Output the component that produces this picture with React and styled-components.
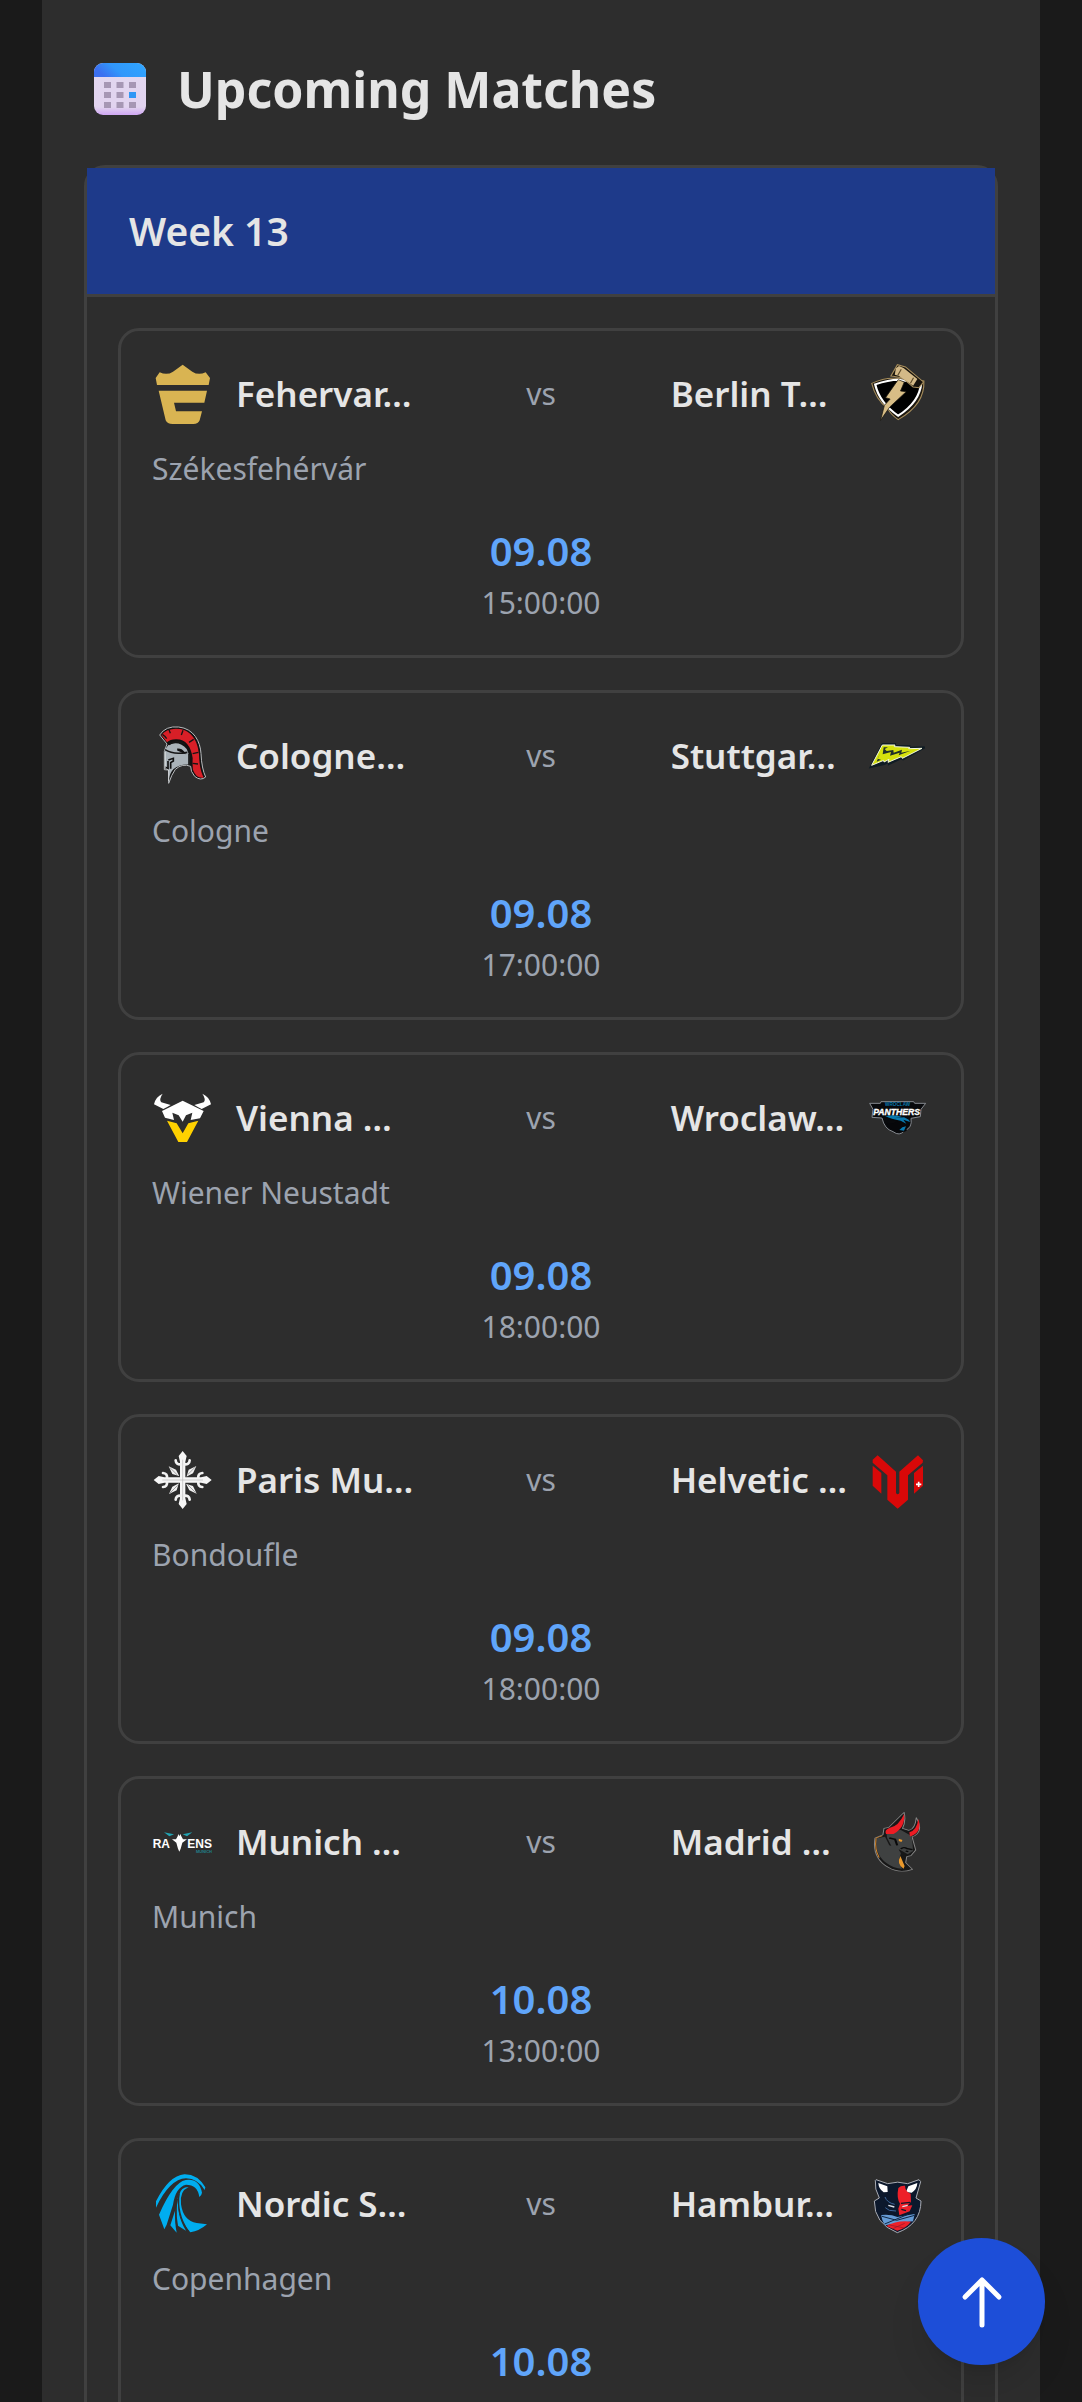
import React from "react";
import styled, { createGlobalStyle } from "styled-components";

const GlobalStyle = createGlobalStyle`
  *, *::before, *::after { box-sizing: border-box; }
  body {
    margin: 0;
    background: #1a1a1a;
    color: #e5e5e5;
    font-family: "Segoe UI", "Noto Sans", "Open Sans", sans-serif;
  }
`;

const Page = styled.div`
  height: 100vh;
  overflow: hidden;
  padding: 0 42px;
`;

const Panel = styled.main`
  min-height: 100%;
  padding: 52px 42px;
  background: #2d2d2d;
`;

const PanelHeader = styled.header`
  display: flex;
  align-items: center;
  gap: 31px;
  padding-left: 10px;
  margin-bottom: 39px;
`;

const CalendarIcon = styled.svg`
  width: 52px;
  height: 52px;
  flex: none;
`;

const Title = styled.h1`
  margin: 0;
  font-size: 50px;
  line-height: 74px;
  font-weight: 700;
`;

const Week = styled.section`
  border: 3px solid #404040;
  border-radius: 21px;
`;

const WeekTitle = styled.h2`
  margin: 0;
  padding: 32px 42px;
  border-bottom: 3px solid #404040;
  background: #1e3a8a;
  font-size: 39px;
  line-height: 62px;
  font-weight: 600;
`;

const MatchList = styled.ul`
  display: flex;
  flex-direction: column;
  gap: 32px;
  margin: 0;
  padding: 31px;
  list-style: none;
`;

const Card = styled.li`
  padding: 31px;
  border: 3px solid #404040;
  border-radius: 21px;
`;

const Teams = styled.div`
  display: grid;
  grid-template-columns: repeat(3, minmax(0, 1fr));
  align-items: center;
`;

const Team = styled.div`
  display: flex;
  flex-direction: ${(p) => (p.$away ? "row-reverse" : "row")};
  align-items: center;
  gap: 20px;
`;

const TeamName = styled.span`
  flex: 1;
  min-width: 0;
  white-space: nowrap;
  font-size: 35px;
  line-height: 52px;
  font-weight: 600;
`;

const Logo = styled.svg`
  width: 64px;
  height: 64px;
  flex: none;
`;

const Muted = styled.span`
  color: #9ca3af;
  font-size: 30px;
  line-height: 42px;
  text-align: center;
`;

const City = styled.p`
  margin: 22px 0 30px;
  color: #9ca3af;
  font-size: 30px;
  line-height: 42px;
`;

const Kickoff = styled.time`
  display: flex;
  flex-direction: column;
`;

const MatchDate = styled.span`
  color: #60a5fa;
  font-size: 40px;
  line-height: 62px;
  font-weight: 600;
  text-align: center;
`;

const TopButton = styled.button`
  position: fixed;
  right: 37px;
  bottom: 37px;
  display: flex;
  align-items: center;
  justify-content: center;
  width: 127px;
  height: 127px;
  padding: 0;
  border: 0;
  border-radius: 50%;
  background: #1d4ed8;
  color: #fff;
  box-shadow: 0 26px 40px -8px rgba(0, 0, 0, 0.12), 0 10px 16px -10px rgba(0, 0, 0, 0.12);
  cursor: pointer;
`;

const ArrowIcon = styled.svg`
  width: 64px;
  height: 64px;
`;

function Calendar() {
  const cells = [];
  for (let r = 0; r < 3; r++) {
    for (let c = 0; c < 3; c++) {
      cells.push(
        <rect key={`${r}${c}`} x={10 + c * 12.5} y={19 + r * 10} width="7" height="6"
          fill={r === 1 && c === 2 ? "#2f97f5" : "#a697b4"} />
      );
    }
  }
  return (
    <CalendarIcon viewBox="0 0 52 52" aria-hidden="true">
      <defs>
        <linearGradient id="calTop" x1="0" x2="1" y1=".3" y2="0">
          <stop offset="0" stopColor="#3b6ff0" />
          <stop offset=".35" stopColor="#3197fb" />
          <stop offset="1" stopColor="#2fa6ff" />
        </linearGradient>
        <linearGradient id="calBody" x1="0" x2="0" y1="0" y2="1">
          <stop offset="0" stopColor="#e2d8ef" />
          <stop offset=".85" stopColor="#e1d3ef" />
          <stop offset="1" stopColor="#cfa6f3" />
        </linearGradient>
      </defs>
      <rect width="52" height="52" rx="9" fill="url(#calBody)" />
      <path d="M0 14V9a9 9 0 0 1 9-9h34a9 9 0 0 1 9 9v5z" fill="url(#calTop)" />
      {cells}
    </CalendarIcon>
  );
}

const logos = {
  fehervar: (
    <Logo viewBox="159 156 192 192" aria-hidden="true">
      <g fill="#d9b452">
        <path d="M174 225l-4-21 12-17q22 10 40-2l29-21 29 21q18 12 40 2l13 17-4 21z" />
        <path d="M179 242h145l-8 36h-91l6 26h78l-7 27q-4 11-19 11h-62q-17 0-21-11z" />
      </g>
    </Logo>
  ),
  berlin: (
    <Logo viewBox="1005 156 167 192" preserveAspectRatio="none" aria-hidden="true">
      <path d="M1020 220q33-17 60-15h26l50 8q3 70-67 116-20-16-27-33-32-28-42-76z" fill="#1d1810" stroke="#a58c5b" strokeWidth="3" />
      <path d="M1029 223q35-14 60-14l60 10q-4 57-60 98-49-39-60-94z" fill="#000" stroke="#fff" strokeWidth="6" />
      <path d="M1070 198l17-34 21 7 47 45-12 17-15-2-28-27-24-5z" fill="#17130d" stroke="#a58c5b" strokeWidth="3" />
      <path d="M1083 175l8-7 12 6 36 33-11 20-38-30-10-3z" fill="#d3b987" />
      <path d="M1097 178l-9 18M1129 203l-8 17" stroke="#5f4d2c" strokeWidth="3" />
      <path d="M1089 209l16 7-10 27 15 2-43 46-24 40 10-45 15-19-12-4z" fill="#d8bd86" stroke="#17130d" strokeWidth="2" />
    </Logo>
  ),
  cologne: (
    <Logo viewBox="69 73 192 192" aria-hidden="true">
      <path d="M92 106q18-28 57-24c46 5 65 44 67 80q2 45 14 70-15 13-33-2-13-15-12-30-25-10-46 9-11 15-20 42v-40l-13-1v-55l8-22z" fill="#111" stroke="#b9bcbf" strokeWidth="3" strokeLinejoin="round" />
      <path d="M97 106q20-23 56-18c40 7 54 43 57 76q1 45 14 70-22 4-32-23-2-15-1-35-8-56-48-57-19-1-29 9z" fill="#d81f27" />
      <path d="M120 90l4 11M162 92l-5 14M194 119l-14 9M208 158l-17 4M207 193l-16-2M113 117q-5-8-13-13" stroke="#151515" strokeWidth="4" fill="none" />
      <path d="M118 136q33-14 55 12l8 19v28q-30-2-48 14-10 10-14 31v-35l-12-6v-48z" fill="#aab3b9" />
      <path d="M119 135q23-18 49-1M108 150q25 16 67 8M180 162v34" fill="none" stroke="#161616" strokeWidth="5" />
      <path d="M118 181l15-5v8l-8 5v18M117 184v23M147 151l17 7q-6-9-17-9z" fill="none" stroke="#111" strokeWidth="5" />
      <path d="M109 157v49l10 5v33" fill="none" stroke="#e6e8ea" strokeWidth="2" />
    </Logo>
  ),
  stuttgart: (
    <Logo viewBox="678 73 192 192" aria-hidden="true">
      <path d="M692 202l36-69h37l-1 5 44 1-1 5 47-1-65 36-6-3-36 17 1-7-15 7z" fill="#101c24" stroke="#101c24" strokeWidth="6" />
      <path d="M695 197l32-61h38l-2 5 46 2-3 4 40-1-59 30-3-5-40 17 3-9-15 8-1-5z" fill="#d5e10d" stroke="#f4f8de" strokeWidth="3" />
      <path d="M731 143h13l-10 5 6 6 20-3 1 8 25-9-2 9 28-6-36 14 3-8-29 9 3-11-25 7zM710 186l13-6-10-3 8-18z" fill="#203029" />
    </Logo>
  ),
  vienna: (
    <Logo viewBox="69 80 192 192" aria-hidden="true">
      <path d="M101 103q-22 10-26 32l28 14q12-6 22-12l-28-8q-8-9 4-26zM220 103q22 10 26 32l-28 14q-12-6-22-12l28-8q8-9-4-26z" fill="#fff" />
      <path d="M99 155l62-31 63 31-11 22-28 5 5-22-19 8-10 19-12-19-19-8 5 22-27-7z" fill="#fff" />
      <path d="M114 184l29 8 18 30 17-30 30-8-34 64h-26z" fill="#ffd100" />
    </Logo>
  ),
  wroclaw: (
    <Logo viewBox="678 80 192 192" aria-hidden="true">
      <path d="M689 132h32l2-5h98l3 5h33l-14 18-2 22-28 5q5 29-20 37-14 18-34 3-26-8-33-41l-30-2 3-24z" fill="#08090c" stroke="#85898f" strokeWidth="3" strokeLinejoin="round" />
      <path d="M724 174q38-15 60-7 24 7 27 28-12 10-11 19-11 8-27 1-26-4-35-24 20 5 34-6-25-2-48-11z" fill="#06070a" />
      <path d="M736 170q32-5 50 3l-24 4 30-3q17 7 18 14l-20-7 9 12-17-9q-29-5-46-14zM787 204l11-3-6 13-14-2z" fill="#0878ae" />
      <text x="773" y="141" textAnchor="middle" fontFamily="Liberation Sans" fontSize="14" fontWeight="700" fill="#0878ae">WROCLAW</text>
      <text x="770" y="167" textAnchor="middle" fontFamily="Liberation Sans" fontSize="26" fontStyle="italic" fontWeight="700" fill="#fff" stroke="#fff" strokeWidth="1">PANTHERS</text>
    </Logo>
  ),
  paris: (
    <Logo viewBox="69 57 192 192" aria-hidden="true">
      {[0, 90, 180, 270].map((a) => (
        <g key={a} transform={`rotate(${a} 161 153)`}>
          <path d="M153 153V98l-4-17 12-15 12 15-4 17v55z" fill="#f6f6f6" />
          <path d="M157 106q-16 2-17-12M165 106q16 2 17-12" fill="none" stroke="#f2f2f2" strokeWidth="8" strokeLinecap="round" />
          <path d="M173 142l6-20 23-11-10 22-20 10z" fill="#f1f1f1" />
          <path d="M176 137l23-23" stroke="#777" strokeWidth="2" />
        </g>
      ))}
      <path d="M161 92v122M100 153h122" stroke="#b5b5b5" strokeWidth="2" />
    </Logo>
  ),
  helvetic: (
    <Logo viewBox="678 57 192 192" aria-hidden="true">
      <g fill="#d90808">
        <path d="M713 79l55 49v64q5 8 10 0v-64l56-49 15 15-1 7-44 38v73l-31 27-31-27v-73l-44-38v-9z" />
        <path d="M698 110l26 22v62l-26-24zM849 110l-27 22v62l27-24z" />
      </g>
      <path d="M836 158v16M828 166h16" stroke="#fff" strokeWidth="5" />
    </Logo>
  ),
  munich: (
    <Logo viewBox="0 0 192 192" aria-hidden="true">
      <g fontFamily="Liberation Sans" fontWeight="700">
        <text x="2" y="114" fontSize="36" fill="#fff">RA</text>
        <text x="106" y="114" fontSize="36" fill="#fff">ENS</text>
        <text x="132" y="128" fontSize="12" fill="#21808b">MUNICH</text>
      </g>
      <path d="M60 88h12l5-9 2-7 3 7 3-7 3 7 5 9h12l-14 10-5 18-4 9-4-9-5-18z" fill="#fff" />
      <path d="M36 67l30 6-14 6zM121 67l-29 6 13 6z" fill="#22a3b1" />
    </Logo>
  ),
  madrid: (
    <Logo viewBox="1390 64 121 192" preserveAspectRatio="none" aria-hidden="true">
      <path d="M1407 148l15-10 2-19 9-3 29-45q4 26-3 48l12 6q12-4 14-38 14 39-3 54l-5 3 7 40-9 17-8 3-2 18 13 20q-26 14-46-6-31-28-25-88z" fill="#171717" stroke="#858585" strokeWidth="2" strokeLinejoin="round" />
      <path d="M1410 149l16-5 8 26 16 8 6 16-4 21 6 25q-16 0-32-20-20-26-16-71zM1428 127l28-3 20 18 2 24 1 21-10 10-15-14-15-8-9-27z" fill="#3f4141" />
      <path d="M1428 136q-4-12 6-18 18-5 28-42 3 40-20 60zM1473 143l-1-12q14-6 17-40 8 38-14 52z" fill="#ec1c24" />
      <path d="M1455 202q-8 24 6 38l2-8zM1452 150l7 4-2 6-5-3z" fill="#e9982c" />
      <path d="M1409 149q-3 34 6 58M1409 148l12-7" fill="none" stroke="#d98a2e" strokeWidth="2" />
      <path d="M1456 181q5-8 12-1l10 3M1465 187l5 2M1434 148l11 4 4 18" fill="none" stroke="#090909" strokeWidth="4" />
    </Logo>
  ),
  nordic: (
    <Logo viewBox="159 160 192 192" aria-hidden="true">
      <g fill="#00adef">
        <path d="M171 267v-19q39-77 85-81 39-1 63 39l-2 8q-20-34-56-35-49 2-90 88z" />
        <path d="M180 288q42-96 80-104 40-6 49 38-1 8-8 13-5-37-40-37-31 7-39 60l-19 60-7 14z" />
        <path d="M269 205q-28 12-23 52 7 50 47 56l31 4q-23 20-50 24-45-49-33-113 4-22 28-23z" />
        <path d="M240 222q-12 60 21 114l-24-15q-10-55 3-99z" />
        <path d="M230 270q-4 40 3 72l-19-22z" />
      </g>
      <path d="M240 226q-8 60 28 112M235 240q-11 50 2 98" fill="none" stroke="#2d2d2d" strokeWidth="4" />
    </Logo>
  ),
  hamburg: (
    <Logo viewBox="678 160 192 192" aria-hidden="true">
      <path d="M708 183l35 12q30-9 60 0l34-12 5 6-14 49 15 9q-1 70-71 95-70-27-69-95l15-9q-15-27-12-53z" fill="#0c182c" stroke="#aaadb5" strokeWidth="3" strokeLinejoin="round" />
      <path d="M715 193l27 10 1 17-12 1q-15-10-16-28zM832 193l-27 10-7 17 17 2q16-10 17-29z" fill="#fff" />
      <path d="M775 208q7-8 20-7 1 18 17 24l1 25-11 11 15-1-8 18-31 12-3-20 5-15q-11-17-5-47z" fill="#ed2029" />
      <path d="M735 235q6 17 29 22M736 267l12 8 20 2" fill="none" stroke="#3e679c" strokeWidth="3" />
      <path d="M783 254l28-3M784 272l14 4" stroke="#0c182c" strokeWidth="4" />
      <path d="M745 260l18 5M787 264l16-4" stroke="#dce1e9" strokeWidth="4" />
      <path d="M724 289q28-3 48 6l52-9-5 22-37 4-47 8q-11-18-11-31z" fill="#659bd5" />
      <path d="M726 293l44 12 54-15M734 316l70-29" fill="none" stroke="#102642" strokeWidth="3" />
      <path d="M739 322q32-18 74-13-14 19-41 27z" fill="#ed2029" />
      <path d="M748 319l45 9M756 331l38-17" stroke="#8d1928" strokeWidth="2" />
    </Logo>
  ),
};

const matches = [
  { home: "Fehervar…", homeLogo: "fehervar", away: "Berlin T…", awayLogo: "berlin", city: "Székesfehérvár", date: "09.08", time: "15:00:00" },
  { home: "Cologne…", homeLogo: "cologne", away: "Stuttgar…", awayLogo: "stuttgart", city: "Cologne", date: "09.08", time: "17:00:00" },
  { home: "Vienna …", homeLogo: "vienna", away: "Wroclaw…", awayLogo: "wroclaw", city: "Wiener Neustadt", date: "09.08", time: "18:00:00" },
  { home: "Paris Mu…", homeLogo: "paris", away: "Helvetic …", awayLogo: "helvetic", city: "Bondoufle", date: "09.08", time: "18:00:00" },
  { home: "Munich …", homeLogo: "munich", away: "Madrid …", awayLogo: "madrid", city: "Munich", date: "10.08", time: "13:00:00" },
  { home: "Nordic S…", homeLogo: "nordic", away: "Hambur…", awayLogo: "hamburg", city: "Copenhagen", date: "10.08", time: "" },
];

function Match({ match }) {
  return (
    <Card>
      <Teams>
        <Team>
          {logos[match.homeLogo]}
          <TeamName>{match.home}</TeamName>
        </Team>
        <Muted>vs</Muted>
        <Team $away>
          {logos[match.awayLogo]}
          <TeamName>{match.away}</TeamName>
        </Team>
      </Teams>
      <City>{match.city}</City>
      <Kickoff>
        <MatchDate>{match.date}</MatchDate>
        {match.time && <Muted>{match.time}</Muted>}
      </Kickoff>
    </Card>
  );
}

export default function App() {
  return (
    <Page>
      <GlobalStyle />
      <Panel>
        <PanelHeader>
          <Calendar />
          <Title>Upcoming Matches</Title>
        </PanelHeader>
        <Week>
          <WeekTitle>Week 13</WeekTitle>
          <MatchList>
            {matches.map((m) => (
              <Match key={m.homeLogo} match={m} />
            ))}
          </MatchList>
        </Week>
      </Panel>
      <TopButton type="button" aria-label="Back to top">
        <ArrowIcon viewBox="0 0 64 64" fill="none" stroke="currentColor" strokeWidth="5" strokeLinecap="round" strokeLinejoin="round" aria-hidden="true">
          <path d="M32 55V10M15 27L32 10l17 17" />
        </ArrowIcon>
      </TopButton>
    </Page>
  );
}
